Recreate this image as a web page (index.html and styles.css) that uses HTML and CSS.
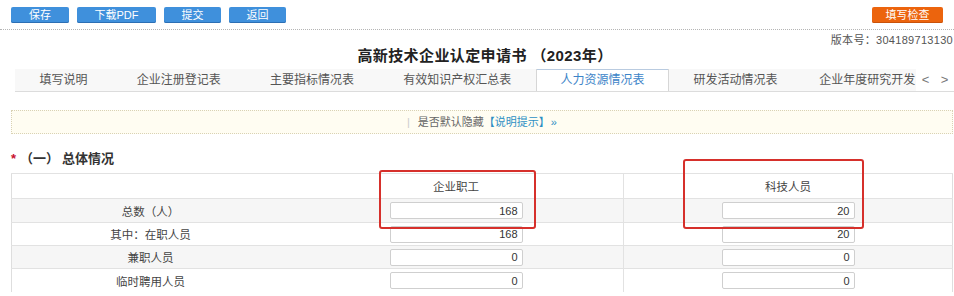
FILE: index.html
```html
<!DOCTYPE html>
<html lang="zh-CN">
<head>
    <meta charset="UTF-8">
    <meta name="viewport" content="width=device-width, initial-scale=1.0">
    <title>高新技术企业认定申请书</title>
    <link rel="stylesheet" href="styles.css">
</head>
<body>
    <div class="toolbar">
        <div class="btn-group">
            <button class="btn btn-blue btn-save">保存</button>
            <button class="btn btn-blue btn-pdf">下载PDF</button>
            <button class="btn btn-blue">提交</button>
            <button class="btn btn-blue">返回</button>
        </div>
        <button class="btn btn-orange">填写检查</button>
    </div>
    <div class="version">版本号：304189713130</div>
    <h1 class="title">高新技术企业认定申请书 （2023年）</h1>

    <div class="tabs">
        <div class="tab-list">
            <div class="tab">填写说明</div>
            <div class="tab">企业注册登记表</div>
            <div class="tab">主要指标情况表</div>
            <div class="tab">有效知识产权汇总表</div>
            <div class="tab active">人力资源情况表</div>
            <div class="tab">研发活动情况表</div>
            <div class="tab tab-last">企业年度研究开发</div>
        </div>
        <div class="tab-arrows"><span>&lt;</span><span>&gt;</span></div>
    </div>

    <div class="notice">
        <span class="sep">|</span>是否默认隐藏<a class="notice-link">【说明提示】</a><span class="arrow">»</span>
    </div>

    <div class="section-title"><span class="req">*</span>（一）<span class="gap"></span>总体情况</div>

    <div class="table-wrap">
        <table class="staff-table">
            <tr class="head">
                <td></td>
                <td>企业职工</td>
                <td class="col-tech">科技人员</td>
            </tr>
            <tr class="odd">
                <td>总数（人）</td>
                <td><input class="num" value="168"></td>
                <td class="col-tech"><input class="num" value="20"></td>
            </tr>
            <tr class="short">
                <td>其中：在职人员</td>
                <td><input class="num" value="168"></td>
                <td class="col-tech"><input class="num" value="20"></td>
            </tr>
            <tr class="odd short">
                <td>兼职人员</td>
                <td><input class="num" value="0"></td>
                <td class="col-tech"><input class="num" value="0"></td>
            </tr>
            <tr>
                <td>临时聘用人员</td>
                <td><input class="num" value="0"></td>
                <td class="col-tech"><input class="num" value="0"></td>
            </tr>
        </table>
        <div class="mark mark-staff"></div>
        <div class="mark mark-tech"></div>
    </div>
</body>
</html>
```

FILE: styles.css
```css
body {
    margin: 0;
    font-family: "Liberation Sans", "Noto Sans CJK SC", sans-serif;
    font-size: 12px;
    color: #333;
    background-color: #fff;
    overflow: hidden;
}
.toolbar {
    display: flex;
    justify-content: space-between;
    align-items: center;
    padding: 7px 11px 6px 11px;
    border-bottom: 1px dotted #b5b5b5;
}
.btn-group {
    display: flex;
    gap: 8px;
}
.btn {
    height: 16px;
    padding: 0;
    border: none;
    border-radius: 2px;
    color: #fff;
    font-family: inherit;
    font-size: 11px;
    line-height: 16px;
    cursor: pointer;
}
.btn-blue {
    width: 57px;
    background-color: #3f90dc;
    box-shadow: inset 0 -1px 0 #2c6fb4;
}
.btn-pdf { width: 79px; }
.btn-save { width: 58px; }
.btn-orange {
    width: 71px;
    background-color: #ec640d;
    box-shadow: inset 0 -1px 0 #c9520a;
}
.version {
    text-align: right;
    padding: 2px 1px 0 0;
    font-size: 11px;
    line-height: 16px;
    color: #555;
    letter-spacing: 0.3px;
}
.title {
    margin: 0;
    text-align: center;
    font-size: 15px;
    line-height: 16px;
    font-weight: bold;
    color: #222;
    padding-left: 16px;
    letter-spacing: 0.4px;
}
.tabs {
    display: flex;
    margin: 5px 0 0 15px;
    height: 22px;
    background-color: #f8f8f8;
    border-bottom: 1px solid #dcdcdc;
}
.tab-list {
    display: flex;
    width: 901px;
    overflow: hidden;
}
.tab {
    flex: none;
    padding: 0 23.6px;
    line-height: 22px;
    color: #555;
    white-space: nowrap;
    border-left: 1px solid transparent;
    border-right: 1px solid transparent;
}
.tab-last {
    padding: 0 0 0 16px;
}
.tab.active {
    background-color: #fff;
    color: #3c84c8;
    border-left-color: #d6d6d6;
    border-right-color: #d6d6d6;
    box-shadow: inset 0 1px 0 #b9cbe0;
    height: 23px;
}
.tab-arrows {
    flex: 1;
    display: flex;
    justify-content: space-around;
    color: #777;
    line-height: 21px;
    font-size: 13px;
    background-color: #fff;
}
.notice {
    margin: 18px 1px 0 11px;
    height: 22px;
    line-height: 22px;
    text-align: center;
    font-size: 11px;
    color: #666;
    background-color: #fffdf2;
    border: 1px dotted #d9d2b4;
}
.sep {
    color: #ccc;
    margin-right: 8px;
}
.notice-link {
    color: #2d8fc4;
}
.arrow {
    color: #2d8fc4;
    margin-left: 1px;
}
.section-title {
    margin: 16px 0 0 11px;
    line-height: 18px;
    font-size: 13px;
    font-weight: bold;
    color: #333;
}
.req {
    color: #c8102e;
    margin-right: 4px;
}
.gap {
    display: inline-block;
    width: 3px;
}
.table-wrap {
    position: relative;
    margin: 5px 1px 0 11px;
}
.staff-table {
    width: 100%;
    border-collapse: collapse;
    table-layout: fixed;
    border-left: 1px solid #dedede;
    border-right: 1px solid #dedede;
}
.staff-table td {
    height: 23px;
    padding: 0;
    text-align: center;
    border-top: 1px solid #e2e2e2;
    color: #444;
    font-size: 11.5px;
}
.staff-table td:first-child { width: 277px; }
.staff-table td:nth-child(2) { width: 334px; }
.staff-table .head td { height: 24px; }
.staff-table .short td { height: 22px; }
.staff-table .odd td { background-color: #f6f6f6; }
.col-tech { border-left: 1px solid #e2e2e2; }
.num {
    width: 133px;
    height: 17px;
    box-sizing: border-box;
    border: 1px solid #cfcfcf;
    border-radius: 2px;
    background-color: #fff;
    text-align: right;
    padding: 0 4px;
    font-family: inherit;
    font-size: 11px;
    color: #333;
    vertical-align: middle;
}
.mark {
    position: absolute;
    border: 2px solid #d6302b;
    border-radius: 3px;
    box-sizing: border-box;
}
.mark-staff {
    left: 368px;
    top: -3px;
    width: 157px;
    height: 59px;
}
.mark-tech {
    left: 672px;
    top: -14px;
    width: 181px;
    height: 70px;
}
```
